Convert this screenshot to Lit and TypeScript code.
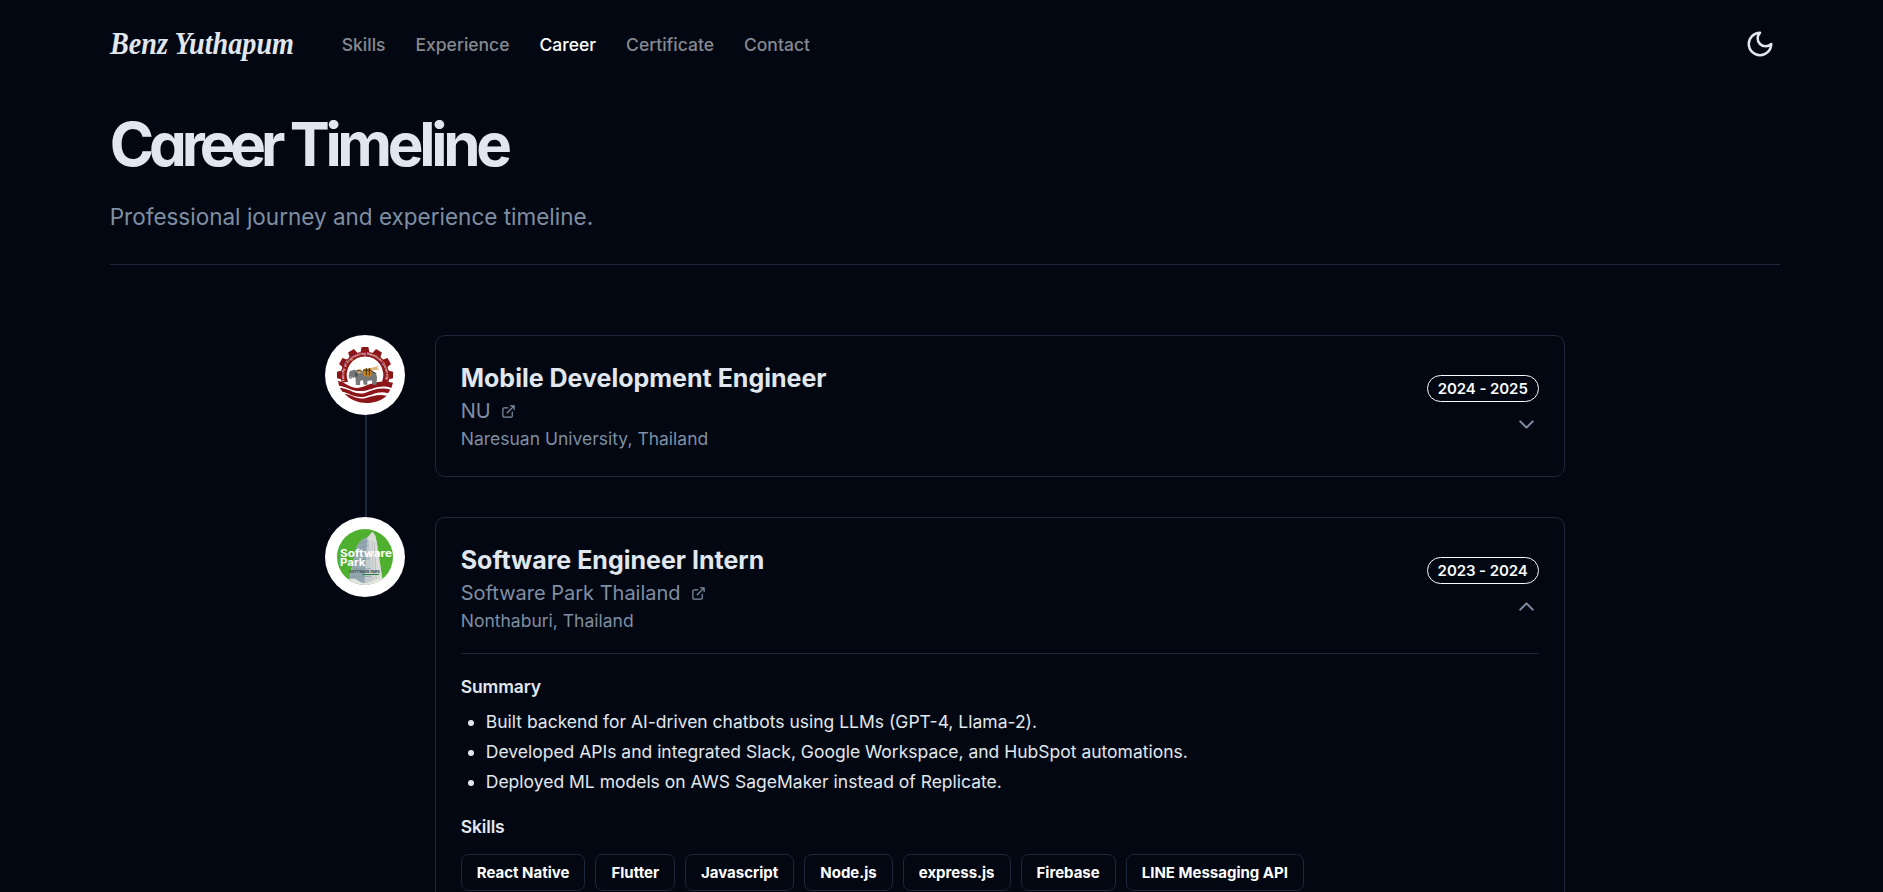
import { LitElement, html, css, svg, nothing } from "lit";
import { customElement, property, state } from "lit/decorators.js";
import { classMap } from "lit/directives/class-map.js";

interface Job {
  logo: "nu" | "park";
  title: string;
  company: string;
  place: string;
  years: string;
  summary: string[];
  skills: string[];
}

const NAV = ["Skills", "Experience", "Career", "Certificate", "Contact"];

const JOBS: Job[] = [
  {
    logo: "nu",
    title: "Mobile Development Engineer",
    company: "NU",
    place: "Naresuan University, Thailand",
    years: "2024 - 2025",
    summary: [],
    skills: [],
  },
  {
    logo: "park",
    title: "Software Engineer Intern",
    company: "Software Park Thailand",
    place: "Nonthaburi, Thailand",
    years: "2023 - 2024",
    summary: [
      "Built backend for AI-driven chatbots using LLMs (GPT-4, Llama-2).",
      "Developed APIs and integrated Slack, Google Workspace, and HubSpot automations.",
      "Deployed ML models on AWS SageMaker instead of Replicate.",
    ],
    skills: ["React Native", "Flutter", "Javascript", "Node.js", "express.js", "Firebase", "LINE Messaging API"],
  },
];

const TEETH = [-90, -60, -30, 0, 30, 60, 90];

@customElement("company-logo")
export class CompanyLogo extends LitElement {
  @property() name = "nu";

  static styles = css`
    :host { display: flex; width: 80px; height: 80px; border-radius: 50%; background: #fff; align-items: center; justify-content: center; }
    svg { width: 56px; height: 56px; display: block; }
    .ring { font: 600 11px "Inter", sans-serif; fill: #f6dede; }
    .park { font: 700 31px "Inter", sans-serif; fill: #fff; }
    .tiny { font: 700 11px "Inter", sans-serif; fill: #3c4a44; }
  `;

  private university() {
    return html`<svg viewBox="0 0 168 168">
      <g fill="#8c1519">
        ${TEETH.map((a) => svg`<path d="M70 18 74 0H94L98 18Z" transform=${`rotate(${a} 84 84)`} />`)}
        <path d="M14 107A73 73 0 1 1 154 107L135 104A55 55 0 1 0 33 104Z" />
        <path d="M3 101C34 111 47 128 72 121 101 113 120 96 168 107L163 123C129 111 108 127 84 131 49 137 32 119 6 116Z" />
        <path d="M8 122C39 124 56 147 86 137 112 128 130 120 160 128L153 139C124 130 108 144 83 149 52 155 35 136 17 135Z" />
        <path d="M23 141C44 142 58 160 87 153 110 146 124 141 149 146 116 176 57 176 23 141Z" />
      </g>
      <path id="arc" d="M23 102A63 63 0 1 1 145 102" fill="none" />
      <text class="ring"><textPath href="#arc" textLength="226">Faculty of Engineering Naresuan University</textPath></text>
      <g>
        <path d="M38 87C34 80 37 71 46 70 54 66 60 70 64 74L97 73C112 70 121 82 120 94L118 113H107L104 100 91 102 91 113H80L78 100 70 101 69 114H57L55 90C49 96 42 89 38 87L37 82Z" fill="#77787a" />
        <path d="M40 82C34 87 39 98 45 91" fill="none" stroke="#77787a" stroke-width="4" />
        <path d="M53 77Q61 75 62 87L56 91Z" fill="#4d4e50" />
        <path d="M78 66 103 64 104 84 96 90 80 86Z" fill="#c98312" />
        <path d="M58 69 70 65 75 76 66 80ZM101 63 127 56 120 63 129 67 103 71Z" fill="#d9b878" />
        <path d="M79 70H103M88 63V85M97 63V85M60 70 77 73M102 72 118 80" stroke="#41331f" stroke-width="3" fill="none" />
      </g>
    </svg>`;
  }

  private park() {
    return html`<svg viewBox="0 0 168 168">
      <defs><clipPath id="disc"><circle cx="84" cy="84" r="84" /></clipPath></defs>
      <g clip-path="url(#disc)">
        <rect width="168" height="168" fill="#4fb02f" />
        <path d="M33 168 56 62Q62 35 99 21L106 8 115 20 119 38 139 168Z" fill="#c3cbcf" />
        <path d="M33 168 56 62Q62 35 91 24L82 168Z" fill="#93a7b0" />
        <path d="M91 26 106 8 115 20 119 38 139 168H106L98 40Z" fill="#d9dcd9" />
        <path d="M62 47 94 36M58 60 95 49M55 76 96 68M51 94 98 89M47 120 101 119M42 142 103 142" stroke="#8295a0" stroke-width="2" />
        <path d="M112 40 118 160M105 35 109 160" stroke="#bcc0be" stroke-width="3" />
        <path d="M22 156Q49 143 65 156T106 156 145 156V168H22Z" fill="#e2e6dc" />
        <rect x="76" y="135" width="50" height="3" fill="#278044" />
      </g>
      <text class="park" x="9" y="83" textLength="156" lengthAdjust="spacingAndGlyphs">Software</text>
      <text class="park" x="9" y="111" textLength="76" lengthAdjust="spacingAndGlyphs">Park</text>
      <text class="tiny" x="37" y="133" textLength="92" lengthAdjust="spacingAndGlyphs">SOFTWARE PARK</text>
    </svg>`;
  }

  render() {
    return this.name === "nu" ? this.university() : this.park();
  }
}

@customElement("timeline-item")
export class TimelineItem extends LitElement {
  @property({ attribute: false }) job!: Job;
  @property({ type: Boolean }) open = false;
  @property({ type: Boolean }) last = false;

  static styles = css`
    :host { display: grid; grid-template-columns: 80px 1130px; column-gap: 30px; }
    .rail { display: flex; flex-direction: column; align-items: center; }
    .line { flex: 1; width: 2px; margin-left: 2px; margin-bottom: -40px; background: #1d283a; }
    .card { box-sizing: border-box; border: 1px solid #1d283a; border-radius: 10px; padding: 25px; }
    .head { display: flex; justify-content: space-between; align-items: center; height: 90px; }
    h2 { margin: 0; font-size: 25px; line-height: 35px; font-weight: 700; }
    .company { display: flex; align-items: center; gap: 10px; font-size: 20px; line-height: 30px; color: #7f8ea3; }
    .place { font-size: 17.5px; line-height: 25px; color: #7f8ea3; }
    .link { width: 15px; height: 15px; }
    .side { display: flex; flex-direction: column; align-items: flex-end; gap: 10px; }
    .years { box-sizing: border-box; height: 27px; border: 1px solid #f8fafc; border-radius: 14px; padding: 0 10px; font-size: 15px; line-height: 25px; font-weight: 600; letter-spacing: -0.08px; color: #f8fafc; white-space: nowrap; }
    .toggle { display: block; width: 25px; height: 25px; padding: 0; border: 0; background: none; color: #7f8ea3; }
    .toggle svg { display: block; width: 25px; height: 25px; }
    svg { fill: none; stroke: currentColor; stroke-width: 2; stroke-linecap: round; stroke-linejoin: round; }
    .body { border-top: 1px solid #1d283a; margin-top: 20px; padding-top: 20px; }
    h3 { margin: 0; font-size: 17.5px; line-height: 25px; font-weight: 600; letter-spacing: -0.15px; }
    .points { margin: 10px 0 20px; padding-left: 25px; display: flex; flex-direction: column; gap: 5px; font-size: 17.5px; line-height: 25px; }
    .tags { display: flex; flex-wrap: wrap; gap: 10px; margin-top: 15px; }
    .tag { box-sizing: border-box; height: 37px; border: 1px solid #1d283a; border-radius: 7.5px; padding: 0 15px; font-size: 15px; line-height: 35px; font-weight: 700; color: #fff; white-space: nowrap; }
  `;

  private flip() {
    this.open = !this.open;
  }

  render() {
    const j = this.job;
    return html`
      <div class="rail">
        <company-logo .name=${j.logo}></company-logo>
        ${this.last ? nothing : html`<div class="line"></div>`}
      </div>
      <article class="card">
        <div class="head">
          <div>
            <h2>${j.title}</h2>
            <div class="company">
              <span>${j.company}</span>
              <svg class="link" viewBox="0 0 24 24"><path d="M15 3h6v6M10 14 21 3M18 13v6a2 2 0 0 1-2 2H5a2 2 0 0 1-2-2V8a2 2 0 0 1 2-2h6" /></svg>
            </div>
            <div class="place">${j.place}</div>
          </div>
          <div class="side">
            <span class="years">${j.years}</span>
            <button class="toggle" aria-label="Toggle details" @click=${this.flip}>
              <svg viewBox="0 0 24 24"><path d=${this.open ? "m18 15-6-6-6 6" : "m6 9 6 6 6-6"} /></svg>
            </button>
          </div>
        </div>
        ${this.open && j.summary.length
          ? html`<div class="body">
              <h3>Summary</h3>
              <ul class="points">${j.summary.map((s) => html`<li>${s}</li>`)}</ul>
              <h3>Skills</h3>
              <div class="tags">${j.skills.map((s) => html`<span class="tag">${s}</span>`)}</div>
            </div>`
          : nothing}
      </article>
    `;
  }
}

@customElement("app-root")
export class AppRoot extends LitElement {
  @state() private current = "Career";

  static styles = css`
    :host { display: block; box-sizing: border-box; height: 892px; overflow: hidden; padding: 0 103.25px 0 109.75px; background: #030711; color: #e1e7ef; font-family: "Inter", sans-serif; }
    .top { display: flex; align-items: center; height: 88px; }
    .brand { display: block; width: 186px; height: 50px; overflow: visible; }
    .brand text { font: italic 700 31px "Liberation Serif", serif; fill: #e1e7ef; }
    nav { display: flex; gap: 30px; margin-left: 46px; flex: 1; }
    .item { font-size: 17.5px; line-height: 25px; font-weight: 500; color: #86898f; cursor: pointer; }
    .item.on { color: #fff; }
    .moon { width: 30px; height: 30px; margin-right: 5px; fill: none; stroke: #e1e7ef; stroke-width: 2; stroke-linecap: round; stroke-linejoin: round; }
    h1 { margin: 23px 0 0; font-size: 60px; line-height: 66px; font-weight: 700; letter-spacing: -4.3px; word-spacing: -0.5px; font-feature-settings: "cv11"; white-space: nowrap; }
    .first { letter-spacing: -5.1px; }
    .lead { margin: 20px 0 0; padding-bottom: 27px; border-bottom: 1px solid #1d283a; font-size: 22.5px; line-height: 40px; color: #7f8ea3; }
    .timeline { display: flex; flex-direction: column; gap: 40px; width: 1240px; margin: 70px auto 0; }
  `;

  render() {
    return html`
      <header class="top">
        <svg class="brand" viewBox="0 0 186 50"><text x="0" y="35" textLength="184" lengthAdjust="spacingAndGlyphs">Benz Yuthapum</text></svg>
        <nav>
          ${NAV.map(
            (n) => html`<a class=${classMap({ item: true, on: n === this.current })} @click=${() => (this.current = n)}>${n}</a>`,
          )}
        </nav>
        <svg class="moon" viewBox="0 0 24 24"><path d="M12 3a6 6 0 0 0 9 9 9 9 0 1 1-9-9Z" /></svg>
      </header>
      <h1><span class="first">Career</span> Timeline</h1>
      <p class="lead">Professional journey and experience timeline.</p>
      <main class="timeline">
        ${JOBS.map(
          (j, i) => html`<timeline-item .job=${j} ?open=${i === 1} ?last=${i === JOBS.length - 1}></timeline-item>`,
        )}
      </main>
    `;
  }
}
